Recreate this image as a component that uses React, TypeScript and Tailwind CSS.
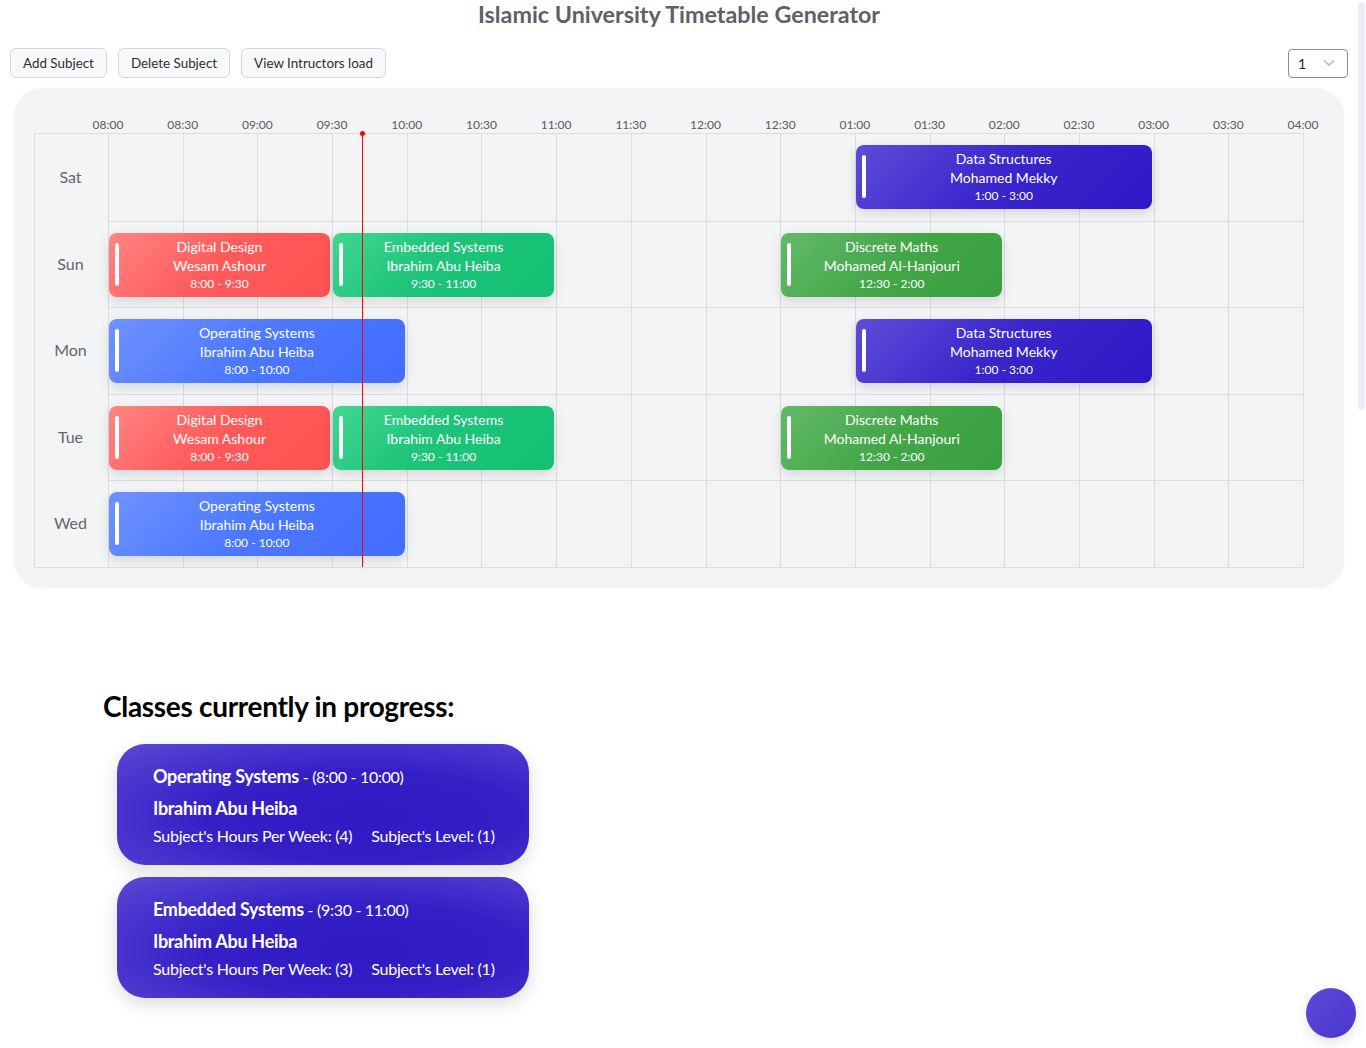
import React from "react";

const SLOT = 1195 / 16;
const times = ["08:00","08:30","09:00","09:30","10:00","10:30","11:00","11:30","12:00","12:30","01:00","01:30","02:00","02:30","03:00","03:30","04:00"];

type Ev = { title: string; who: string; time: string; start: number; len: number; kind: "red" | "green" | "blue" | "purple" | "dgreen" };

const bgs: Record<Ev["kind"], string> = {
  red: "bg-[linear-gradient(135deg,#ff8585_0%,#ff5a5a_50%,#ff5252_100%)]",
  green: "bg-[linear-gradient(135deg,#42d691_0%,#1dc47a_45%,#14c073_100%)]",
  blue: "bg-[linear-gradient(135deg,#7091ff_0%,#4c78ff_50%,#416cff_100%)]",
  purple: "bg-[linear-gradient(135deg,#5e4cd8_0%,#3a25cb_50%,#2e18c6_100%)]",
  dgreen: "bg-[linear-gradient(135deg,#63ba69_0%,#43a748_50%,#3a9f40_100%)]",
};

const DD: Ev = { title: "Digital Design", who: "Wesam Ashour", time: "8:00 - 9:30", start: 0, len: 3, kind: "red" };
const ES: Ev = { title: "Embedded Systems", who: "Ibrahim Abu Heiba", time: "9:30 - 11:00", start: 3, len: 3, kind: "green" };
const OS: Ev = { title: "Operating Systems", who: "Ibrahim Abu Heiba", time: "8:00 - 10:00", start: 0, len: 4, kind: "blue" };
const DS: Ev = { title: "Data Structures", who: "Mohamed Mekky", time: "1:00 - 3:00", start: 10, len: 4, kind: "purple" };
const DM: Ev = { title: "Discrete Maths", who: "Mohamed Al-Hanjouri", time: "12:30 - 2:00", start: 9, len: 3, kind: "dgreen" };

const days: { name: string; events: Ev[] }[] = [
  { name: "Sat", events: [DS] },
  { name: "Sun", events: [DD, ES, DM] },
  { name: "Mon", events: [OS, DS] },
  { name: "Tue", events: [DD, ES, DM] },
  { name: "Wed", events: [OS] },
];

function EventCard({ ev }: { ev: Ev }) {
  return (
    <div
      className={`absolute top-[11px] h-[64px] rounded-[8px] text-white flex flex-col items-center justify-center shadow-[0_4px_12px_rgba(0,0,0,0.13)] z-10 ${bgs[ev.kind]}`}
      style={{ left: ev.start * SLOT, width: ev.len * SLOT - 3 }}
    >
      <div className="absolute left-[6px] top-[10px] h-[43px] w-[4px] rounded-full bg-white" />
      <div className="text-[14px] leading-[19px]">{ev.title}</div>
      <div className="text-[14px] leading-[19px]">{ev.who}</div>
      <div className="text-[12px] leading-[18px]">{ev.time}</div>
    </div>
  );
}

function ProgressCard({ title, time, who, hours, level }: { title: string; time: string; who: string; hours: number; level: number }) {
  return (
    <div className="w-[412px] h-[121px] rounded-[28px] text-white pl-[36px] pt-[19px] bg-[radial-gradient(ellipse_at_60%_60%,#2f19c4_0%,#3520c6_45%,#5a49d4_100%)] shadow-[0_6px_18px_rgba(0,0,0,0.14)]">
      <div className="h-[26px] leading-[26px] tracking-[-0.3px]">
        <span className="text-[18px] font-bold">{title}</span>
        <span className="text-[16px]"> - ({time})</span>
      </div>
      <div className="mt-[6px] h-[26px] leading-[26px] text-[18px] font-bold tracking-[-0.3px]">{who}</div>
      <div className="mt-[3px] h-[24px] leading-[24px] text-[16px] flex gap-[19px] tracking-[-0.25px]">
        <span>Subject's Hours Per Week: ({hours})</span>
        <span>Subject's Level: ({level})</span>
      </div>
    </div>
  );
}

export default function App() {
  return (
    <div className="relative w-[1366px] h-[1048px] bg-white overflow-hidden font-['Lato',sans-serif]">
      <div className="w-[1358px]">
        <h1 className="text-center text-[23.3px] leading-[30px] -mt-[1px] font-bold text-[#5f5f66]">Islamic University Timetable Generator</h1>

        <div className="mt-[19px] flex items-center pl-[10px] pr-[10px]">
          <div className="flex gap-[11px]">
            <button className="h-[30px] px-[12px] rounded-[6px] border border-[#d4d6d9] bg-[#f8f9fa] text-[13.4px] text-[#2a2d35]">Add Subject</button>
            <button className="h-[30px] px-[12px] rounded-[6px] border border-[#d4d6d9] bg-[#f8f9fa] text-[13.4px] text-[#2a2d35]">Delete Subject</button>
            <button className="h-[30px] px-[12px] rounded-[6px] border border-[#d4d6d9] bg-[#f8f9fa] text-[13.4px] text-[#2a2d35]">View Intructors load</button>
          </div>
          <div className="ml-auto w-[60px] h-[29px] rounded-[4px] border border-[#8c8c8c] flex items-center justify-between pl-[9px] pr-[12px]">
            <span className="text-[14px] text-[#3a1a1a]">1</span>
            <svg width="12" height="8" viewBox="0 0 12 8" fill="none"><path d="M1 1.5L6 6L11 1.5" stroke="#b8b8b8" strokeWidth="1.5" /></svg>
          </div>
        </div>

        <div className="mt-[10px] ml-[14px] w-[1330px] h-[500px] rounded-[28px] bg-[#f3f4f6] pl-[20px] pt-[23px] shadow-[0_1px_4px_rgba(0,0,0,0.03)]">
          <div className="relative h-[22px] ml-[74px] w-[1195px]">
            {times.map((t, i) => (
              <span key={t} className="absolute top-[6px] -translate-x-1/2 text-[12px] leading-[16px] text-[#5a5a5a]" style={{ left: i * SLOT }}>{t}</span>
            ))}
          </div>
          <div className="relative w-[1270px] border-t border-b border-l border-[#dcdde0] flex flex-col">
            {days.map((d, di) => (
              <div key={d.name} className="flex h-[86.5px]">
                <div className="w-[74px] shrink-0 border-r border-[#dcdde0] flex items-center justify-center text-[16px] text-[#666] pr-[2px]">{d.name}</div>
                <div className={`relative flex-1 flex ${di > 0 ? "border-t border-[#dcdde0]" : ""}`}>
                  {Array.from({ length: 16 }).map((_, i) => (
                    <div key={i} className="flex-1 border-r border-[#dcdde0]" />
                  ))}
                  {d.events.map((ev, i) => (
                    <EventCard key={i} ev={ev} />
                  ))}
                </div>
              </div>
            ))}
            <div className="absolute left-[327px] top-0 bottom-0 w-[1px] bg-[#ff0000] z-20">
              <div className="absolute -left-[2px] -top-[3px] w-[5px] h-[5px] rounded-full bg-[#ff0000]" />
            </div>
          </div>
        </div>

        <h2 className="mt-[102px] ml-[103px] text-[28px] leading-[32px] font-bold text-black tracking-[-0.3px]">Classes currently in progress:</h2>

        <div className="mt-[22px] ml-[117px] flex flex-col gap-[12px]">
          <ProgressCard title="Operating Systems" time="8:00 - 10:00" who="Ibrahim Abu Heiba" hours={4} level={1} />
          <ProgressCard title="Embedded Systems" time="9:30 - 11:00" who="Ibrahim Abu Heiba" hours={3} level={1} />
        </div>
      </div>

      <div className="absolute left-[1306px] top-[988px] w-[50px] h-[50px] rounded-full bg-[linear-gradient(135deg,#5c4bd6,#4a35d0)] shadow-[0_4px_12px_rgba(0,0,0,0.12)]" />

      <div className="absolute left-[1358px] top-[2px] w-[7px] h-[408px] rounded-full bg-[#ecebfa]" />
    </div>
  );
}
